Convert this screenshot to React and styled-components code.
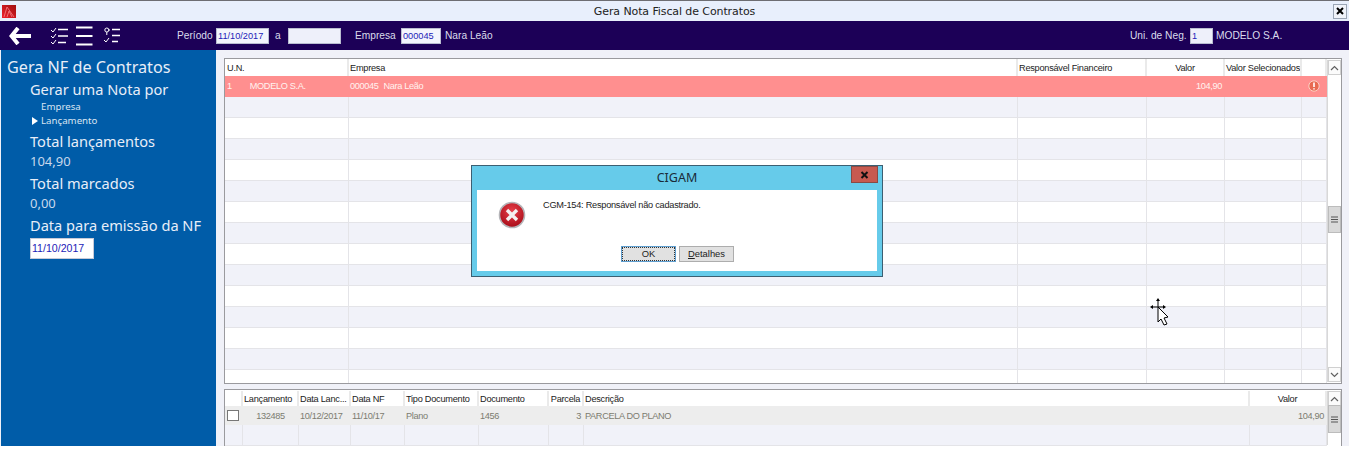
import React from "react";
import styled, { createGlobalStyle } from "styled-components";

const GlobalStyle = createGlobalStyle`
  html, body { margin: 0; padding: 0; background: #fff; overflow: hidden; }
  body { font-family: "Liberation Sans", "DejaVu Sans", sans-serif; }
`;

const Page = styled.div`
  position: relative;
  width: 1349px;
  height: 446px;
  display: flex;
  flex-direction: column;
  overflow: hidden;
  background: #f0f1f8;
`;

const TitleBar = styled.div`
  height: 20px;
  border-top: 1px solid #6d6d72;
  background: #e8effc;
  display: flex;
  align-items: center;
  padding: 0 2px 0 2px;
  flex-shrink: 0;
`;

const TitleText = styled.div`
  flex: 1;
  text-align: center;
  font-size: 11px;
  color: #222;
  font-family: "DejaVu Sans", sans-serif;
  letter-spacing: -0.1px;
`;

const CloseBox = styled.div`
  width: 12px;
  height: 13px;
  border: 1px solid #9aa5b5;
  background: #f0f3fa;
  display: flex;
  align-items: center;
  justify-content: center;
`;

const Toolbar = styled.div`
  height: 29px;
  flex-shrink: 0;
  background: #1c0057;
  display: flex;
  align-items: center;
  color: #d9dcec;
  font-size: 10.2px;
`;

const Tools = styled.div`
  display: flex;
  align-items: center;
  width: 177px;
  padding-left: 9px;
  box-sizing: border-box;
`;

const ToolIcon = styled.svg`
  margin-left: ${(p) => p.$left || 0}px;
  flex-shrink: 0;
`;

const ToolbarLabel = styled.span`
  width: ${(p) => p.$width}px;
  padding-left: ${(p) => p.$pad || 0}px;
  box-sizing: border-box;
  flex-shrink: 0;
  white-space: nowrap;
`;

const RightGroup = styled.div`
  margin-left: auto;
  display: flex;
  align-items: center;
`;

const HeaderInput = styled.div`
  width: ${(p) => p.$width}px;
  height: 16px;
  flex-shrink: 0;
  box-sizing: border-box;
  background: ${(p) => (p.$empty ? "#eef0fa" : "#f3f5fc")};
  border: 1px solid #b9bdd0;
  color: #1c1cb8;
  font-size: 9.2px;
  line-height: 14px;
  padding-left: 1px;
  white-space: nowrap;
`;

const Body = styled.div`
  flex: 1;
  display: flex;
  min-height: 0;
`;

const Sidebar = styled.div`
  width: 215px;
  margin-left: 1px;
  flex-shrink: 0;
  background: #005ca8;
  color: #e8eef8;
  padding: 7px 0 0 6px;
  box-sizing: border-box;
  font-family: "Noto Sans", sans-serif;
`;

const SideTitle = styled.div`
  font-size: 16.2px;
  line-height: 20px;
  white-space: nowrap;
`;

const SideGroup = styled.div`
  padding-left: 23px;
`;

const SideHeading = styled.div`
  font-size: 14.6px;
  line-height: 21px;
  margin-top: ${(p) => p.$top || 0}px;
  white-space: nowrap;
`;

const SideValue = styled.div`
  font-size: 13px;
  line-height: 20px;
  margin-top: -1px;
  color: #c8d8ec;
`;

const SideOption = styled.div`
  font-size: 9.7px;
  line-height: 14px;
  padding-left: 11px;
  position: relative;
  color: #d8e4f2;
`;

const Arrow = styled.span`
  position: absolute;
  left: 2px;
  top: 3px;
  width: 0;
  height: 0;
  border-left: 6px solid #fff;
  border-top: 4px solid transparent;
  border-bottom: 4px solid transparent;
`;

const DateInput = styled.div`
  width: 64px;
  height: 21px;
  box-sizing: border-box;
  margin-top: 2px;
  background: #fff;
  border: 1px solid #c6cad8;
  color: #1c1cb8;
  font-family: "Liberation Sans", sans-serif;
  font-size: 10.6px;
  line-height: 19px;
  padding-left: 1px;
`;

const Content = styled.div`
  flex: 1;
  padding: 8px 7px 0 8px;
  display: flex;
  flex-direction: column;
  gap: 5px;
  min-width: 0;
`;

const GridFrame = styled.div`
  height: ${(p) => p.$height}px;
  flex-shrink: 0;
  display: flex;
  border: 1px solid #9a9a9e;
  border-bottom-width: ${(p) => (p.$open ? 0 : 1)}px;
  box-sizing: border-box;
  background: #fff;
  overflow: hidden;
`;

const GridArea = styled.div`
  flex: 1;
  min-width: 0;
  overflow: hidden;
`;

const Row = styled.div`
  display: grid;
  grid-template-columns: ${(p) => p.$cols};
  height: ${(p) => p.$height}px;
  box-sizing: border-box;
  background: ${(p) => p.$bg};
  color: ${(p) => p.$color || "#222"};
  font-size: 9.2px;
  letter-spacing: ${(p) => (p.$color ? -0.35 : -0.25)}px;
  padding-top: ${(p) => p.$shift || 0}px;
`;

const HeadCell = styled.div`
  border-right: 2px solid #eaeaea;
  display: flex;
  align-items: center;
  justify-content: ${(p) => (p.$center ? "center" : "flex-start")};
  padding-left: ${(p) => (p.$center ? 0 : 1)}px;
  box-sizing: border-box;
  white-space: nowrap;
  overflow: hidden;
  color: #222;
  &:first-child {
    padding-left: 2px;
  }
`;

const Cell = styled.div`
  border-right: 1px solid ${(p) => (p.$plain ? "transparent" : "#e4e4e8")};
  border-bottom: 1px solid ${(p) => (p.$plain ? "transparent" : "#e4e4e8")};
  display: flex;
  align-items: center;
  justify-content: ${(p) => (p.$right ? "flex-end" : p.$center ? "center" : "flex-start")};
  padding: 0 ${(p) => (p.$right ? 2 : 0)}px 0 ${(p) => (p.$right || p.$center ? 0 : 1)}px;
  box-sizing: border-box;
  white-space: nowrap;
  overflow: hidden;
  &:first-child {
    padding-left: 2px;
  }
`;

const Gap = styled.span`
  display: inline-block;
  width: ${(p) => p.$width}px;
`;

const Scrollbar = styled.div`
  width: 14px;
  box-sizing: border-box;
  flex-shrink: 0;
  margin: 1px 0;
  background: #fff;
  border-left: 1px solid #d8d8d8;
  display: flex;
  flex-direction: column;
  justify-content: space-between;
  position: relative;
`;

const ScrollButton = styled.div`
  height: 13px;
  border: 1px solid #d0d0d0;
  background: #fbfbfb;
  display: flex;
  align-items: center;
  justify-content: center;
`;

const Thumb = styled.div`
  position: absolute;
  left: 0;
  right: 0;
  top: ${(p) => p.$top}px;
  height: ${(p) => p.$height}px;
  background: #d9d9d9;
  border: 1px solid #bcbcbc;
  box-sizing: border-box;
  display: flex;
  align-items: center;
  justify-content: center;
`;

const Dialog = styled.div`
  position: absolute;
  left: 471px;
  top: 165px;
  width: 412px;
  height: 112px;
  box-sizing: border-box;
  background: #66cbea;
  border: 1px solid #3c5f72;
  padding: 24px 5px 5px 5px;
`;

const DialogTitle = styled.div`
  position: absolute;
  left: 0;
  right: 0;
  top: 4px;
  text-align: center;
  font-family: "Noto Sans", sans-serif;
  font-size: 12.5px;
  line-height: 16px;
  color: #1a2a38;
`;

const DialogClose = styled.div`
  position: absolute;
  right: 4px;
  top: 0;
  width: 27px;
  height: 17px;
  background: #c75a50;
  border: 1px solid #8a4a44;
  box-sizing: border-box;
  display: flex;
  align-items: center;
  justify-content: center;
`;

const DialogBody = styled.div`
  height: 81px;
  background: #fff;
  display: flex;
  flex-direction: column;
`;

const DialogMessage = styled.div`
  display: flex;
  height: 56px;
`;

const DialogIcon = styled.div`
  width: 66px;
  padding: 11px 0 0 21px;
  box-sizing: border-box;
  flex-shrink: 0;
`;

const DialogText = styled.div`
  font-size: 9.2px;
  letter-spacing: -0.25px;
  color: #222;
  padding-top: 10px;
`;

const DialogActions = styled.div`
  display: flex;
  justify-content: center;
  gap: 3px;
  padding-left: 1px;
`;

const DialogButton = styled.div`
  width: 55px;
  height: 16px;
  box-sizing: border-box;
  background: #e1e1e1;
  border: 1px solid ${(p) => (p.$focus ? "#5f9fd0" : "#adadad")};
  outline: ${(p) => (p.$focus ? "1px dotted #333" : "none")};
  outline-offset: -2px;
  font-size: 9.4px;
  line-height: 14px;
  text-align: center;
  color: #222;
`;

const Underline = styled.span`
  text-decoration: underline;
`;

const Cursor = styled.svg`
  position: absolute;
  left: 1149px;
  top: 297px;
`;

const TOP_COLS = "124px 669px 129px 78px 77px 1fr";
const BOTTOM_COLS = "18px 56px 52px 54px 74px 70px 35px 666px 1fr";

const Chevron = ({ up }) => (
  <svg width="9" height="6" viewBox="0 0 9 6">
    <path d={up ? "M1 5 L4.5 1.5 L8 5" : "M1 1 L4.5 4.5 L8 1"} fill="none" stroke="#606060" strokeWidth="1.2" />
  </svg>
);

const Grip = () => (
  <svg width="7" height="7" viewBox="0 0 7 7">
    <path d="M0 1 H7 M0 3.5 H7 M0 6 H7" stroke="#555" strokeWidth="1.2" />
  </svg>
);

const BackIcon = () => (
  <ToolIcon width="22" height="18" viewBox="0 0 22 18">
    <path d="M9 1 L2.5 9 L9 17 M3 9 H22" fill="none" stroke="#fff" strokeWidth="4" />
  </ToolIcon>
);

const CheckListIcon = () => (
  <ToolIcon $left={19} width="19" height="18" viewBox="0 0 19 18">
    <path d="M1 3 L3 5 L6 1 M1 9 L3 11 L6 7 M1 15 L3 17 L6 13" fill="none" stroke="#fff" strokeWidth="1" />
    <path d="M8 2.5 H18 M8 9 H18 M8 15.5 H16" stroke="#fff" strokeWidth="1.6" />
  </ToolIcon>
);

const LinesIcon = () => (
  <ToolIcon $left={7} width="18" height="20" viewBox="0 0 18 20">
    <path d="M0 1.5 H16.5 M0 10 H16.5 M0 18.5 H16.5" stroke="#fff" strokeWidth="2" />
  </ToolIcon>
);

const MixedListIcon = () => (
  <ToolIcon $left={9} width="18" height="18" viewBox="0 0 18 18">
    <circle cx="3.8" cy="3" r="2" fill="none" stroke="#fff" strokeWidth="1" />
    <path d="M3.8 5 V8 M6 3 H7" fill="none" stroke="#fff" strokeWidth="1" />
    <path d="M1 13 L3 15 L6 11" fill="none" stroke="#fff" strokeWidth="1" />
    <path d="M9 2.5 H17 M9 8.5 H17 M9 14.5 H15" stroke="#fff" strokeWidth="1.6" />
  </ToolIcon>
);

const AppLogo = () => (
  <svg width="14" height="13" viewBox="0 0 14 13">
    <defs>
      <linearGradient id="logoFill" x1="0" y1="1" x2="1" y2="0">
        <stop offset="0%" stopColor="#f0202c" />
        <stop offset="100%" stopColor="#a01010" />
      </linearGradient>
    </defs>
    <rect width="14" height="13" fill="url(#logoFill)" />
    <path d="M2 12 L5 2 L12 12 M5 12 L7 6 L10 12" fill="none" stroke="#f88890" strokeWidth="1" opacity="0.75" />
  </svg>
);

const ErrorIcon = () => (
  <svg width="28" height="28" viewBox="0 0 28 28">
    <defs>
      <radialGradient id="errorFill" cx="50%" cy="35%" r="65%">
        <stop offset="0%" stopColor="#e8404a" />
        <stop offset="100%" stopColor="#a80c18" />
      </radialGradient>
    </defs>
    <circle cx="14" cy="14" r="12.5" fill="url(#errorFill)" stroke="#b4b4b8" strokeWidth="1.6" />
    <path d="M9 9 L19 19 M19 9 L9 19" stroke="#f4f0f0" strokeWidth="3.4" />
  </svg>
);

const AlertIcon = () => (
  <svg width="12" height="12" viewBox="0 0 12 12">
    <circle cx="6" cy="6" r="5.2" fill="#e86a50" stroke="#fbd0c4" strokeWidth="1" />
    <path d="M6 2.6 V7 M6 8.2 V9.6" stroke="#fff" strokeWidth="1.6" />
  </svg>
);

const topColumns = ["U.N.", "Empresa", "Responsável Financeiro", "Valor", "Valor Selecionados", ""];
const bottomColumns = ["", "Lançamento", "Data Lanc...", "Data NF", "Tipo Documento", "Documento", "Parcela", "Descrição", "Valor"];

const App = () => (
  <Page>
    <GlobalStyle />
    <TitleBar>
      <AppLogo />
      <TitleText>Gera Nota Fiscal de Contratos</TitleText>
      <CloseBox>
        <svg width="8" height="8" viewBox="0 0 8 8">
          <path d="M1 1 L7 7 M7 1 L1 7" stroke="#000" strokeWidth="2" />
        </svg>
      </CloseBox>
    </TitleBar>

    <Toolbar>
      <Tools>
        <BackIcon />
        <CheckListIcon />
        <LinesIcon />
        <MixedListIcon />
      </Tools>
      <ToolbarLabel $width={39}>Período</ToolbarLabel>
      <HeaderInput $width={53}>11/10/2017</HeaderInput>
      <ToolbarLabel $width={19} $pad={6}>a</ToolbarLabel>
      <HeaderInput $width={53} $empty />
      <ToolbarLabel $width={60} $pad={14}>Empresa</ToolbarLabel>
      <HeaderInput $width={40}>000045</HeaderInput>
      <ToolbarLabel $width={60} $pad={4}>Nara Leão</ToolbarLabel>
      <RightGroup>
        <ToolbarLabel $width={60}>Uni. de Neg.</ToolbarLabel>
        <HeaderInput $width={23} $empty>1</HeaderInput>
        <ToolbarLabel $width={136} $pad={3}>MODELO S.A.</ToolbarLabel>
      </RightGroup>
    </Toolbar>

    <Body>
      <Sidebar>
        <SideTitle>Gera NF de Contratos</SideTitle>
        <SideGroup>
          <SideHeading $top={2}>Gerar uma Nota por</SideHeading>
          <SideOption>Empresa</SideOption>
          <SideOption>
            <Arrow />
            Lançamento
          </SideOption>
          <SideHeading $top={3}>Total lançamentos</SideHeading>
          <SideValue>104,90</SideValue>
          <SideHeading $top={2}>Total marcados</SideHeading>
          <SideValue>0,00</SideValue>
          <SideHeading $top={2}>Data para emissão da NF</SideHeading>
          <DateInput>11/10/2017</DateInput>
        </SideGroup>
      </Sidebar>

      <Content>
        <GridFrame $height={326}>
          <GridArea>
            <Row $cols={TOP_COLS} $height={17} $bg="#fff">
              {topColumns.map((title, i) => (
                <HeadCell key={i} $center={title === "Valor"}>{title}</HeadCell>
              ))}
            </Row>
            <Row $cols={TOP_COLS} $height={21} $bg="#ff8f8f" $color="#fff3f0">
              <Cell $plain>1<Gap $width={18} />MODELO S.A.</Cell>
              <Cell $plain>000045<Gap $width={5} />Nara Leão</Cell>
              <Cell $plain />
              <Cell $plain $right>104,90</Cell>
              <Cell $plain />
              <Cell $plain $center><AlertIcon /></Cell>
            </Row>
            {Array.from({ length: 14 }, (_, i) => (
              <Row key={i} $cols={TOP_COLS} $height={21} $bg={i % 2 === 0 ? "#f1f2f9" : "#fff"}>
                {topColumns.map((_, j) => (
                  <Cell key={j} />
                ))}
              </Row>
            ))}
          </GridArea>
          <Scrollbar>
            <ScrollButton><Chevron up /></ScrollButton>
            <Thumb $top={146} $height={27}><Grip /></Thumb>
            <ScrollButton><Chevron /></ScrollButton>
          </Scrollbar>
        </GridFrame>

        <GridFrame $height={57} $open>
          <GridArea>
            <Row $cols={BOTTOM_COLS} $height={16} $bg="#fff" $shift={1}>
              {bottomColumns.map((title, i) => (
                <HeadCell key={i} $center={title === "Valor" || title === "Parcela"}>{title}</HeadCell>
              ))}
            </Row>
            <Row $cols={BOTTOM_COLS} $height={19} $bg="#ededed" $color="#7c7c70" $shift={2}>
              <Cell $plain>
                <svg width="12" height="12" viewBox="0 0 12 12">
                  <rect x="0.5" y="0.5" width="11" height="10" fill="#fff" stroke="#777" />
                </svg>
              </Cell>
              <Cell $plain $center>132485</Cell>
              <Cell $plain>10/12/2017</Cell>
              <Cell $plain>11/10/17</Cell>
              <Cell $plain>Plano</Cell>
              <Cell $plain>1456</Cell>
              <Cell $plain $right>3</Cell>
              <Cell $plain>PARCELA DO PLANO</Cell>
              <Cell $plain $right>104,90</Cell>
            </Row>
            <Row $cols={BOTTOM_COLS} $height={21} $bg="#f1f2f9">
              {bottomColumns.map((_, j) => (
                <Cell key={j} />
              ))}
            </Row>
          </GridArea>
          <Scrollbar>
            <ScrollButton><Chevron up /></ScrollButton>
            <Thumb $top={14} $height={28}><Grip /></Thumb>
          </Scrollbar>
        </GridFrame>
      </Content>
    </Body>

    <Dialog>
      <DialogTitle>CIGAM</DialogTitle>
      <DialogClose>
        <svg width="9" height="8" viewBox="0 0 9 8">
          <path d="M1.5 1 L7.5 7 M7.5 1 L1.5 7" stroke="#111" strokeWidth="2" />
        </svg>
      </DialogClose>
      <DialogBody>
        <DialogMessage>
          <DialogIcon><ErrorIcon /></DialogIcon>
          <DialogText>CGM-154: Responsável não cadastrado.</DialogText>
        </DialogMessage>
        <DialogActions>
          <DialogButton $focus>OK</DialogButton>
          <DialogButton><Underline>D</Underline>etalhes</DialogButton>
        </DialogActions>
      </DialogBody>
    </Dialog>

    <Cursor width="20" height="30" viewBox="0 0 20 30">
      <path d="M9 1 L7 4 H11 Z M1 10 L4 8 V12 Z M17 10 L14 8 V12 Z" fill="#000" />
      <path d="M9 3 V10 M3 10 H15" stroke="#000" strokeWidth="1" />
      <path d="M9 10 V25 L12 22 L15 28 L18 27 L15 21 L19 20 Z" fill="#fff" stroke="#000" strokeWidth="1" />
    </Cursor>
  </Page>
);

export default App;
